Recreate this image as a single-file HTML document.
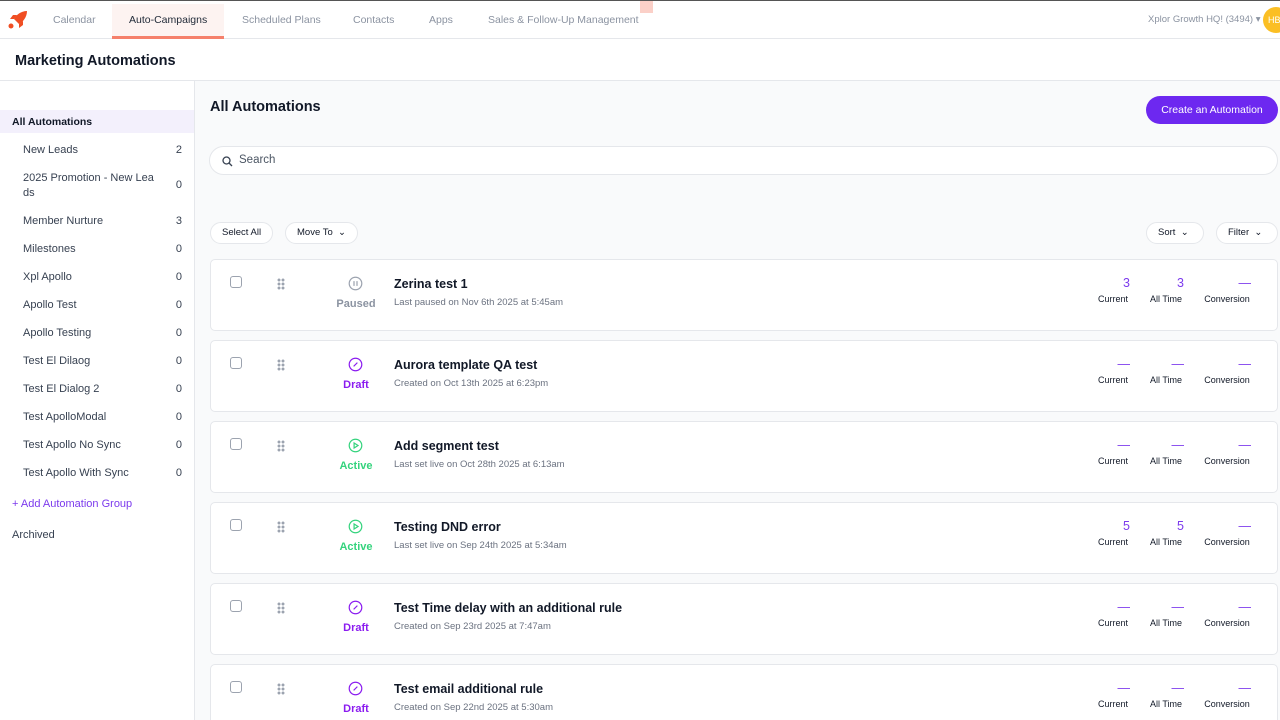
<!DOCTYPE html>
<html><head><style>
*{box-sizing:border-box;margin:0;padding:0}
html,body{width:1280px;height:720px;overflow:hidden}
body{font-family:"Liberation Sans",sans-serif;background:#fff;position:relative;color:#111827}
.top{position:absolute;top:0;left:0;width:1280px;height:39px;border-top:1px solid #555;border-bottom:1px solid #e5e7eb;background:#fff}
.nav{position:absolute;top:13px;font-size:10.5px;color:#8b93a1}
.hdr{position:absolute;top:39px;left:0;width:1280px;height:42px;border-bottom:1px solid #e5e7eb;background:#fff}
.side{position:absolute;top:81px;left:0;width:195px;height:639px;border-right:1px solid #e5e7eb;background:#fff}
.si{position:absolute;left:23px;font-size:11px;color:#374151;width:165px}
.si span{position:absolute;right:6px;top:0}
.main{position:absolute;top:81px;left:195px;width:1085px;height:639px;background:#f9fafb}
.card{position:absolute;left:210px;width:1068px;height:72px;background:#fff;border:1px solid #e5e7eb;border-radius:5px;overflow:hidden}
.cb{position:absolute;left:19px;top:16px;width:12px;height:12px;border:1px solid #9ca3af;border-radius:3px;background:#fff}
.grip{position:absolute;left:66px;top:18px;width:8px;height:12px;background:radial-gradient(circle,#9ca3af 1.3px,transparent 1.6px) 0 0/4px 4px}
.ic{position:absolute;left:137px;top:16px;width:15px;height:15px}
.st{position:absolute;left:110px;width:70px;text-align:center;top:38px;font-size:11px;font-weight:bold}
.t{position:absolute;left:183px;top:17px;font-size:12.5px;font-weight:bold;color:#111827}
.d{position:absolute;left:183px;top:37px;font-size:9.5px;color:#6b7280}
.n{position:absolute;top:16px;font-size:12.5px;color:#7c3aed;text-align:right;width:60px}
.l{position:absolute;top:34px;font-size:9px;color:#111827;text-align:center;width:60px}
.pill{position:absolute;top:222px;height:22px;border:1px solid #e5e7eb;border-radius:11px;background:#fff;font-size:9.5px;color:#111827;line-height:20px;padding:0 11px}
</style></head><body>
<div class="top">
<svg style="position:absolute;left:7px;top:9px" width="22" height="20" viewBox="0 0 22 20"><path d="M20 1 C14 1 9 5 7 9 L12 14 C16 12 20 7 20 1Z" fill="#f04e23"/><path d="M7 9 L3 9 L6 5 L10 5Z M12 14 L12 18 L16 15 L16 11Z" fill="#f04e23"/><circle cx="4" cy="16" r="2.5" fill="#f04e23"/></svg>
<div class="nav" style="left:53px">Calendar</div>
<div style="position:absolute;left:112px;top:3px;width:112px;height:35px;background:#fdf3f1;border-bottom:3px solid #f5806b"></div>
<div class="nav" style="left:129px;color:#1f2937">Auto-Campaigns</div>
<div class="nav" style="left:242px">Scheduled Plans</div>
<div class="nav" style="left:353px">Contacts</div>
<div class="nav" style="left:429px">Apps</div>
<div class="nav" style="left:488px">Sales &amp; Follow-Up Management</div>
<div style="position:absolute;left:640px;top:0;width:13px;height:12px;background:#fbd0c8"></div>
<div class="nav" style="left:1148px;font-size:9.5px;top:13px">Xplor Growth HQ! (3494) ▾</div>
<div style="position:absolute;left:1263px;top:6px;width:26px;height:26px;border-radius:50%;background:#fbbf24;color:#fff;font-size:9px;line-height:26px;padding-left:5px">HB</div>
</div>
<div class="hdr"><div style="position:absolute;left:15px;top:14px;font-size:14.5px;font-weight:bold;color:#111827">Marketing Automations</div></div>
<div class="side">
<div style="position:absolute;top:29px;left:0;width:194px;height:23px;background:#f3f0fc"></div>
<div style="position:absolute;left:12px;top:35px;font-size:10.5px;font-weight:bold">All Automations</div>
<div class="si" style="top:63px">New Leads<span>2</span></div>
<div class="si" style="top:90px;width:150px;line-height:15px;white-space:nowrap">2025 Promotion - New Lea<br>ds</div><div class="si" style="top:98px">&nbsp;<span>0</span></div>
<div class="si" style="top:134px">Member Nurture<span>3</span></div>
<div class="si" style="top:162px">Milestones<span>0</span></div>
<div class="si" style="top:190px">Xpl Apollo<span>0</span></div>
<div class="si" style="top:218px">Apollo Test<span>0</span></div>
<div class="si" style="top:246px">Apollo Testing<span>0</span></div>
<div class="si" style="top:274px">Test El Dilaog<span>0</span></div>
<div class="si" style="top:302px">Test El Dialog 2<span>0</span></div>
<div class="si" style="top:330px">Test ApolloModal<span>0</span></div>
<div class="si" style="top:358px">Test Apollo No Sync<span>0</span></div>
<div class="si" style="top:386px">Test Apollo With Sync<span>0</span></div>
<div style="position:absolute;left:12px;top:417px;font-size:11px;color:#7c3aed">+ Add Automation Group</div>
<div style="position:absolute;left:12px;top:448px;font-size:11px;color:#374151">Archived</div>
</div>
<div class="main"></div>
<div style="position:absolute;left:210px;top:99px;font-size:14.5px;font-weight:bold">All Automations</div>
<div style="position:absolute;left:1146px;top:96px;width:132px;height:28px;border-radius:14px;background:#6d28f0;color:#fff;font-size:10.5px;line-height:28px;text-align:center">Create an Automation</div>
<div style="position:absolute;left:209px;top:146px;width:1069px;height:29px;border:1px solid #e5e7eb;border-radius:15px;background:#fff">
<svg style="position:absolute;left:12px;top:9px" width="11" height="11" viewBox="0 0 11 11"><circle cx="4.5" cy="4.5" r="3.5" fill="none" stroke="#374151" stroke-width="1.3"/><path d="M7 7L10 10" stroke="#374151" stroke-width="1.3"/></svg>
<div style="position:absolute;left:29px;top:7px;font-size:11.5px;color:#4b5563">Search</div></div>
<div class="pill" style="left:210px">Select All</div>
<div class="pill" style="left:285px">Move To &nbsp;⌄</div>
<div class="pill" style="left:1146px;width:58px">Sort &nbsp;⌄</div>
<div class="pill" style="left:1216px;width:62px">Filter &nbsp;⌄</div>

<div class="card" style="top:259px"><div class="cb"></div><div class="grip"></div>
<svg class="ic" viewBox="0 0 16 16"><circle cx="8" cy="8" r="6.7" fill="none" stroke="#9ca3af" stroke-width="1.3"/><path d="M6.4 5.5v5M9.6 5.5v5" stroke="#9ca3af" stroke-width="1.3"/></svg>
<div class="st" style="color:#8b93a1">Paused</div><div class="t">Zerina test 1</div><div class="d">Last paused on Nov 6th 2025 at 5:45am</div>
<div class="n" style="left:859px">3</div><div class="l" style="left:872px">Current</div><div class="n" style="left:913px">3</div><div class="l" style="left:925px">All Time</div><div class="n" style="left:980px">—</div><div class="l" style="left:986px">Conversion</div></div>

<div class="card" style="top:340px"><div class="cb"></div><div class="grip"></div>
<svg class="ic" viewBox="0 0 16 16"><circle cx="8" cy="8" r="6.7" fill="none" stroke="#8b1cf0" stroke-width="1.3"/><path d="M6 10L10 6" stroke="#8b1cf0" stroke-width="1.3"/></svg>
<div class="st" style="color:#8b1cf0">Draft</div><div class="t">Aurora template QA test</div><div class="d">Created on Oct 13th 2025 at 6:23pm</div>
<div class="n" style="left:859px">—</div><div class="l" style="left:872px">Current</div><div class="n" style="left:913px">—</div><div class="l" style="left:925px">All Time</div><div class="n" style="left:980px">—</div><div class="l" style="left:986px">Conversion</div></div>

<div class="card" style="top:421px"><div class="cb"></div><div class="grip"></div>
<svg class="ic" viewBox="0 0 16 16"><circle cx="8" cy="8" r="6.7" fill="none" stroke="#34d37d" stroke-width="1.3"/><path d="M6.5 5.3v5.4L10.7 8z" fill="none" stroke="#34d37d" stroke-width="1.3"/></svg>
<div class="st" style="color:#34d37d">Active</div><div class="t">Add segment test</div><div class="d">Last set live on Oct 28th 2025 at 6:13am</div>
<div class="n" style="left:859px">—</div><div class="l" style="left:872px">Current</div><div class="n" style="left:913px">—</div><div class="l" style="left:925px">All Time</div><div class="n" style="left:980px">—</div><div class="l" style="left:986px">Conversion</div></div>

<div class="card" style="top:502px"><div class="cb"></div><div class="grip"></div>
<svg class="ic" viewBox="0 0 16 16"><circle cx="8" cy="8" r="6.7" fill="none" stroke="#34d37d" stroke-width="1.3"/><path d="M6.5 5.3v5.4L10.7 8z" fill="none" stroke="#34d37d" stroke-width="1.3"/></svg>
<div class="st" style="color:#34d37d">Active</div><div class="t">Testing DND error</div><div class="d">Last set live on Sep 24th 2025 at 5:34am</div>
<div class="n" style="left:859px">5</div><div class="l" style="left:872px">Current</div><div class="n" style="left:913px">5</div><div class="l" style="left:925px">All Time</div><div class="n" style="left:980px">—</div><div class="l" style="left:986px">Conversion</div></div>

<div class="card" style="top:583px"><div class="cb"></div><div class="grip"></div>
<svg class="ic" viewBox="0 0 16 16"><circle cx="8" cy="8" r="6.7" fill="none" stroke="#8b1cf0" stroke-width="1.3"/><path d="M6 10L10 6" stroke="#8b1cf0" stroke-width="1.3"/></svg>
<div class="st" style="color:#8b1cf0">Draft</div><div class="t">Test Time delay with an additional rule</div><div class="d">Created on Sep 23rd 2025 at 7:47am</div>
<div class="n" style="left:859px">—</div><div class="l" style="left:872px">Current</div><div class="n" style="left:913px">—</div><div class="l" style="left:925px">All Time</div><div class="n" style="left:980px">—</div><div class="l" style="left:986px">Conversion</div></div>

<div class="card" style="top:664px"><div class="cb"></div><div class="grip"></div>
<svg class="ic" viewBox="0 0 16 16"><circle cx="8" cy="8" r="6.7" fill="none" stroke="#8b1cf0" stroke-width="1.3"/><path d="M6 10L10 6" stroke="#8b1cf0" stroke-width="1.3"/></svg>
<div class="st" style="color:#8b1cf0">Draft</div><div class="t">Test email additional rule</div><div class="d">Created on Sep 22nd 2025 at 5:30am</div>
<div class="n" style="left:859px">—</div><div class="l" style="left:872px">Current</div><div class="n" style="left:913px">—</div><div class="l" style="left:925px">All Time</div><div class="n" style="left:980px">—</div><div class="l" style="left:986px">Conversion</div></div>
</body></html>
